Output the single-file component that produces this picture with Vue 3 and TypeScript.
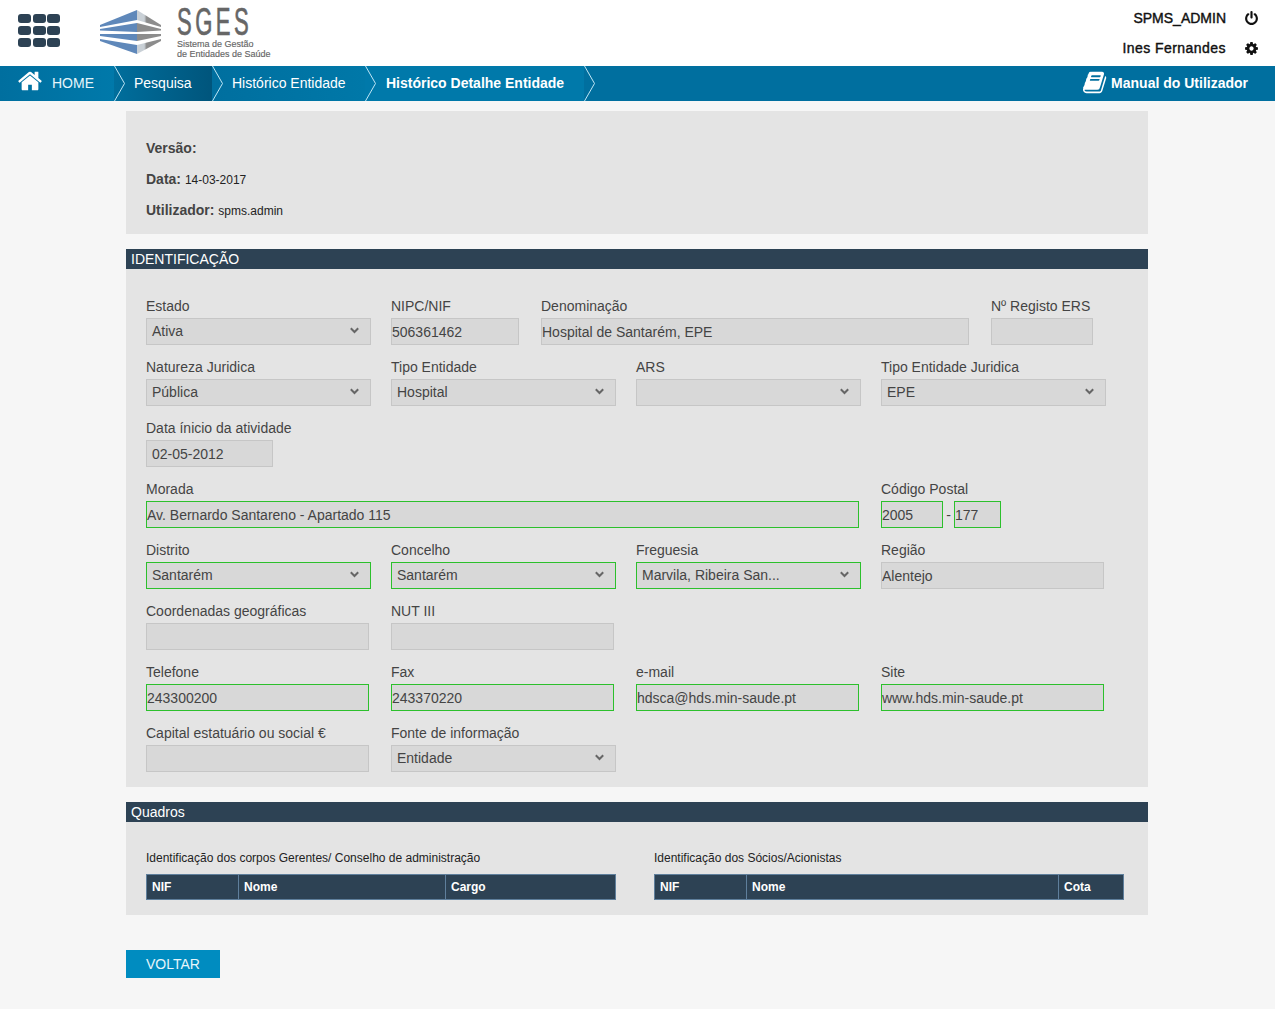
<script setup lang="ts">
interface Field {
  label: string;
  value?: string;
  select?: boolean;
  green?: boolean;
  padded?: boolean;
  cell: number;
  width: number;
}

const sel = (label: string, value = '', green = false): Field => ({ label, value, select: true, green, cell: 245, width: 225 });
const inp = (label: string, value = '', green = false, cell = 245, width = 223): Field => ({ label, value, green, cell, width });

const rows: Field[][] = [
  [sel('Estado', 'Ativa'), inp('NIPC/NIF', '506361462', false, 150, 128), inp('Denominação', 'Hospital de Santarém, EPE', false, 450, 428), inp('Nº Registo ERS', '', false, 120, 102)],
  [sel('Natureza Juridica', 'Pública'), sel('Tipo Entidade', 'Hospital'), sel('ARS'), sel('Tipo Entidade Juridica', 'EPE')],
  [{ label: 'Data ínicio da atividade', value: '02-05-2012', padded: true, cell: 245, width: 127 }],
  [inp('Morada', 'Av. Bernardo Santareno - Apartado 115', true, 735, 713)],
  [sel('Distrito', 'Santarém', true), sel('Concelho', 'Santarém', true), sel('Freguesia', 'Marvila, Ribeira San...', true), inp('Região', 'Alentejo')],
  [inp('Coordenadas geográficas'), inp('NUT III')],
  [inp('Telefone', '243300200', true), inp('Fax', '243370220', true), inp('e-mail', 'hdsca@hds.min-saude.pt', true), inp('Site', 'www.hds.min-saude.pt', true)],
  [inp('Capital estatuário ou social €'), sel('Fonte de informação', 'Entidade')],
];

const tables = [
  { title: 'Identificação dos corpos Gerentes/ Conselho de administração', cols: [{ name: 'NIF', w: 92 }, { name: 'Nome', w: 207 }, { name: 'Cargo', w: 171 }] },
  { title: 'Identificação dos Sócios/Acionistas', cols: [{ name: 'NIF', w: 92 }, { name: 'Nome', w: 312 }, { name: 'Cota', w: 66 }] },
];

const crumbs = [
  { label: 'Pesquisa', cls: 'c-search' },
  { label: 'Histórico Entidade', cls: 'c-hist' },
  { label: 'Histórico Detalhe Entidade', cls: 'c-detail' },
];
</script>

<template>
  <div class="page">
    <header class="top">
      <div class="apps">
        <span v-for="n in 9" :key="n"></span>
      </div>
      <svg class="logo-mark" width="62" height="46" viewBox="0 0 62 46">
        <defs>
          <linearGradient id="fade" x1="0" x2="1" y1="0" y2="0">
            <stop offset="0.3" stop-color="#c9d0d6" />
            <stop offset="0.4" stop-color="#8c8c8c" />
          </linearGradient>
        </defs>
        <polygon points="0,15 37,0 37,10 0,17" fill="#5f88ba" />
        <polygon points="0,19 37,13 37,22 0,20.500" fill="#5f88ba" />
        <polygon points="0,24 37,24 37,31 0,26" fill="#5f88ba" />
        <polygon points="0,29 37,35 37,44 0,31" fill="#5f88ba" />
        <polygon points="37,0 61,15 61,17 37,10" fill="url(#fade)" />
        <polygon points="37,13 61,19 61,20.500 37,22" fill="#8c8c8c" />
        <polygon points="37,24 61,24 61,26 37,31" fill="#8c8c8c" />
        <polygon points="37,35 61,29 61,31 37,44" fill="url(#fade)" />
      </svg>
      <div class="logo-text">
        <div class="logo-name">SGES</div>
        <div class="logo-sub">Sistema de Gestão<br />de Entidades de Saúde</div>
      </div>
      <div class="user">
        <div class="user-row first">
          <span>SPMS_ADMIN</span>
          <svg width="15" height="15" viewBox="0 0 1792 1792">
            <path fill="#111" d="M1664 896q0 156-61 298t-164 245-245 164-298 61-298-61-245-164-164-245-61-298q0-182 80.500-343t226.500-270q43-32 95.500-25t83.500 50q32 42 24.500 94.500t-49.500 84.500q-98 74-151.500 181t-53.500 228q0 104 40.500 198.500t109.500 163.500 163.500 109.500 198.500 40.500 198.500-40.500 163.500-109.500 109.500-163.500 40.500-198.500q0-121-53.500-228t-151.500-181q-42-32-49.500-84.500t24.500-94.500q31-43 84-50t95 25q146 109 226.500 270t80.500 343zm-640-768v640q0 52-38 90t-90 38-90-38-38-90v-640q0-52 38-90t90-38 90 38 38 90z" />
          </svg>
        </div>
        <div class="user-row">
          <span>Ines Fernandes</span>
          <svg width="15" height="15" viewBox="0 0 1792 1792">
            <path fill="#111" d="M1152 896q0-106-75-181t-181-75-181 75-75 181 75 181 181 75 181-75 75-181zm512-109v222q0 12-8 23t-20 13l-185 28q-19 54-39 91 35 50 107 138 10 12 10 25t-9 23q-27 37-99 108t-94 71q-12 0-26-9l-138-108q-44 23-91 38-16 136-29 186-7 28-36 28h-222q-14 0-24.500-8.500t-11.500-21.500l-28-184q-49-16-90-37l-141 107q-10 9-25 9-14 0-25-11-126-114-165-168-7-10-7-23 0-12 8-23 15-21 51-66.500t54-70.500q-27-50-41-99l-183-27q-13-2-21-12.500t-8-23.500v-222q0-12 8-23t19-13l186-28q14-46 39-92-40-57-107-138-10-12-10-24 0-10 9-23 26-36 98.500-107.500t94.500-71.500q13 0 26 10l138 107q44-23 91-38 16-136 29-186 7-28 36-28h222q14 0 24.500 8.500t11.500 21.500l28 184q49 16 90 37l142-107q9-9 24-9 13 0 25 10 129 119 165 170 7 8 7 22 0 12-8 23-15 21-51 66.500t-54 70.500q26 50 41 98l183 28q13 2 22 12.500t9 23.500z" />
          </svg>
        </div>
      </div>
    </header>

    <nav class="nav">
      <a class="crumb c-home">
        <svg class="home-icon" width="26" height="26" viewBox="0 0 1792 1792">
          <path fill="#fff" d="M1472 992v480q0 26-19 45t-45 19h-384v-384h-256v384h-384q-26 0-45-19t-19-45v-480q0-1 .5-3t.5-3l575-474 575 474q1 2 1 6zm223-69l-62 74q-8 9-21 11h-3q-13 0-21-7l-692-577-692 577q-12 8-24 7-13-2-21-11l-62-74q-8-10-7-23.500t11-21.500l719-599q32-26 76-26t76 26l244 204v-195q0-14 9-23t23-9h192q14 0 23 9t9 23v408l219 182q10 8 11 21.500t-7 23.500z" />
        </svg>
        <span>HOME</span>
        <svg class="chev" width="12" height="35" viewBox="0 0 12 35"><path d="M.5 0 10.500 17.500.5 35" fill="none" stroke="#bfe6f5" /></svg>
      </a>
      <a v-for="c in crumbs" :key="c.label" class="crumb" :class="c.cls">
        <span>{{ c.label }}</span>
        <svg class="chev" width="12" height="35" viewBox="0 0 12 35"><path d="M.5 0 10.500 17.500.5 35" fill="none" stroke="#bfe6f5" /></svg>
      </a>
      <a class="manual">
        <svg width="25" height="25" viewBox="0 0 1792 1792">
          <path fill="#fff" d="M1639 478q40 57 18 129l-275 906q-19 64-76.500 107.500t-122.500 43.500h-923q-77 0-148.500-53.500t-99.500-131.500q-24-67-2-127 0-4 3-27t4-37q1-8-3-21.500t-3-19.500q2-11 8-21t16.500-23.500 16.500-23.500q23-38 45-91.500t30-91.500q3-10 .5-30t-.5-28q3-11 17-28t17-23q21-36 42-92t25-90q1-9-2.500-32t.5-28q4-13 22-30.500t22-22.500q19-26 42.500-84.500t27.500-96.500q1-8-3-25.500t-2-26.500q2-8 9-18t18-23 17-21q8-12 16.500-30.500t15-35 16-36 19.500-32 26.500-23.500 36-11.500 47.500 5.500l-1 3q38-9 51-9h761q74 0 114 56t18 130l-274 906q-36 119-71.500 153.500t-128.500 34.500h-869q-27 0-38 15-11 16-1 43 24 70 144 70h923q29 0 56-15.500t35-41.500l300-987q7-22 5-57 38 15 59 43zm-1064 2q-4 13 2 22.500t20 9.500h608q13 0 25.500-9.500t16.500-22.500l21-64q4-13-2-22.500t-20-9.500h-608q-13 0-25.500 9.500t-16.500 22.500zm-83 256q-4 13 2 22.500t20 9.500h608q13 0 25.500-9.500t16.500-22.500l21-64q4-13-2-22.500t-20-9.500h-608q-13 0-25.500 9.500t-16.500 22.500z" />
        </svg>
        <span>Manual do Utilizador</span>
      </a>
    </nav>

    <main class="content">
      <section class="panel info">
        <div><b>Versão:</b></div>
        <div><b>Data:</b> <small>14-03-2017</small></div>
        <div><b>Utilizador:</b> <small>spms.admin</small></div>
      </section>

      <h2 class="bar">IDENTIFICAÇÃO</h2>
      <section class="panel form">
        <div v-for="(row, i) in rows" :key="i" class="row">
          <div v-for="f in row" :key="f.label" class="cell" :style="{ width: f.cell + 'px' }">
            <label>{{ f.label }}</label>
            <div v-if="f.select" class="select" :class="{ green: f.green }" :style="{ width: f.width + 'px' }">
              <span>{{ f.value }}</span>
              <svg width="9" height="7" viewBox="0 0 9 7"><path d="M.8 1.300 4.500 5 8.200 1.300" fill="none" stroke="#666" stroke-width="2" /></svg>
            </div>
            <input v-else class="input" :class="{ green: f.green, padded: f.padded }" :style="{ width: f.width + 'px' }" :value="f.value" readonly />
          </div>
          <div v-if="i === 3" class="cell">
            <label>Código Postal</label>
            <div class="postal">
              <input class="input green cp1" value="2005" readonly />
              <span>-</span>
              <input class="input green cp2" value="177" readonly />
            </div>
          </div>
        </div>
      </section>

      <h2 class="bar quadros">Quadros</h2>
      <section class="panel tables">
        <div v-for="t in tables" :key="t.title" class="tbl">
          <p>{{ t.title }}</p>
          <div class="thead">
            <div v-for="c in t.cols" :key="c.name" class="th" :style="{ width: c.w + 'px' }">{{ c.name }}</div>
          </div>
        </div>
      </section>

      <button class="back">VOLTAR</button>
    </main>
  </div>
</template>

<style>
body {
  margin: 0;
  background: #f6f6f6;
}
</style>

<style scoped>
.page {
  font-family: "Liberation Sans", Arial, sans-serif;
  font-size: 14px;
  color: #444;
  min-height: 1009px;
  background: #f6f6f6;
}

/* Header */
.top {
  display: flex;
  align-items: flex-start;
  height: 66px;
  background: #fff;
  box-sizing: border-box;
  position: relative;
}
.apps {
  display: grid;
  grid-template-columns: repeat(3, 13px);
  grid-auto-rows: 9px;
  gap: 3px 1.5px;
  margin: 14px 0 0 18px;
}
.apps span {
  background: #2d4254;
  border-radius: 3px;
}
.logo-mark {
  margin: 10px 0 0 40px;
}
.logo-text {
  margin: 7px 0 0 15px;
  color: #666;
}
.logo-name {
  font-size: 38px;
  line-height: 31px;
  letter-spacing: 6px;
  transform: scaleX(0.58);
  transform-origin: left;
  height: 31px;
  -webkit-text-stroke: 0.7px #666;
}
.logo-sub {
  font-size: 9px;
  line-height: 10px;
  margin-top: 1px;
  white-space: nowrap;
  -webkit-text-stroke: 0.15px #666;
}
.user {
  margin-left: auto;
  padding: 3px 16px 0 0;
  color: #111;
}
.user-row {
  display: flex;
  justify-content: flex-end;
  align-items: center;
  gap: 18px;
  height: 30px;
  font-size: 14px;
  letter-spacing: 0.45px;
  -webkit-text-stroke: 0.4px #111;
}
.user-row.first {
  letter-spacing: 0;
}

/* Nav */
.nav {
  display: flex;
  height: 35px;
  background: #006f9f;
  color: #fff;
}
.crumb {
  position: relative;
  display: flex;
  align-items: center;
  height: 35px;
  box-sizing: border-box;
  padding-bottom: 2px;
}
.chev {
  position: absolute;
  right: -12px;
  top: 0;
  z-index: 2;
}
.c-home {
  width: 114px;
  padding-left: 17px;
  gap: 9px;
  background: linear-gradient(90deg, #006f9f, #0079aa);
}
.home-icon {
  margin-top: -3px;
}
.c-home span {
  color: #e6f5fb;
}
.c-search {
  width: 98px;
  padding-left: 20px;
  background: linear-gradient(90deg, #006e9c, #00557c);
}
.c-hist {
  width: 153px;
  padding-left: 20px;
  background: linear-gradient(90deg, #006f9f, #0078a8);
}
.c-detail {
  width: 219px;
  padding-left: 21px;
  font-weight: 700;
  background: #0079aa;
}
.manual {
  margin-left: auto;
  display: flex;
  align-items: center;
  gap: 3px;
  padding: 0 27px 2px 0;
  font-weight: 700;
}

/* Content */
.content {
  width: 1022px;
  margin-left: 126px;
  padding-top: 10px;
}
.panel {
  background: #e4e4e4;
}
.info {
  height: 123px;
  box-sizing: border-box;
  padding: 28px 20px 0;
  margin-bottom: 15px;
}
.info div {
  height: 31px;
  line-height: 18px;
}
.info b {
  color: #444;
}
.info small {
  font-size: 12px;
  color: #222;
}
.bar {
  margin: 0;
  height: 20px;
  padding-left: 5px;
  background: #2d4254;
  color: #fff;
  font-size: 14px;
  font-weight: 400;
  line-height: 20px;
}
.form {
  padding: 28px 0 2px 20px;
  height: 518px;
  box-sizing: border-box;
}
.row {
  display: flex;
  height: 61px;
}
.cell {
  flex: none;
}
.cell label {
  display: block;
  height: 18px;
  line-height: 18px;
  margin-bottom: 3px;
}
.select,
.input {
  display: block;
  height: 27px;
  box-sizing: border-box;
  background: #d8d8d8;
  border: 1px solid #c6c6c6;
  font: 14px "Liberation Sans", Arial, sans-serif;
  color: #444;
  outline: none;
  border-radius: 0;
}
.input {
  padding: 0;
}
.input.padded {
  padding-left: 5px;
}
.select {
  display: flex;
  align-items: center;
  justify-content: space-between;
  padding: 0 11px 2px 5px;
}
.green {
  border-color: #2cc02c;
}
.postal {
  display: flex;
  align-items: center;
}
.postal span {
  width: 11px;
  text-align: center;
}
.cp1 {
  width: 62px;
}
.cp2 {
  width: 47px;
}
.quadros {
  margin-top: 15px;
}
.tables {
  display: flex;
  gap: 38px;
  height: 93px;
  box-sizing: border-box;
  padding: 28px 0 0 20px;
}
.tbl p {
  margin: 0 0 8px;
  font-size: 12px;
  line-height: 16px;
  color: #222;
}
.thead {
  display: flex;
  height: 26px;
  box-sizing: border-box;
  background: #2d4254;
  border: 1px solid #5f7f9c;
  width: 470px;
}
.th {
  box-sizing: border-box;
  padding-left: 5px;
  border-right: 1px solid #5f7f9c;
  color: #fff;
  font-size: 12px;
  font-weight: 700;
  line-height: 24px;
}
.th:last-child {
  border-right: 0;
  flex: 1;
}
.back {
  display: block;
  margin-top: 35px;
  width: 94px;
  height: 28px;
  padding: 0;
  border: 0;
  background: #008cc0;
  color: #e6f5fb;
  font: 14px "Liberation Sans", Arial, sans-serif;
}
</style>
